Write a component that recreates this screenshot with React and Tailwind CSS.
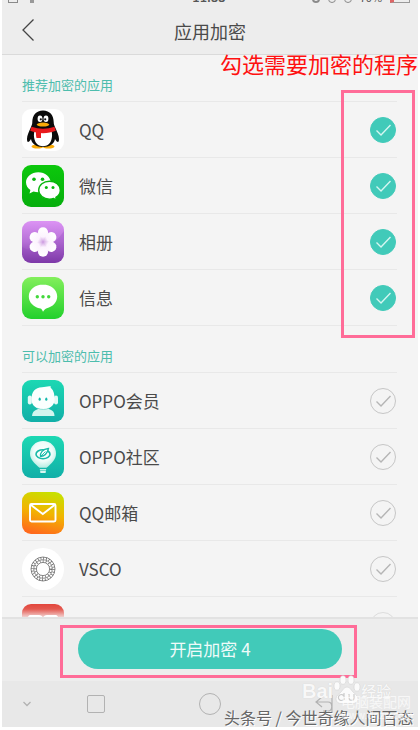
import React, { useState } from 'react';

const QQIcon = () => (
  <svg viewBox="0 0 42 42" className="size-[42px] shrink-0">
    <rect width="42" height="42" rx="9" fill="#fff" />
    <ellipse cx="15.500" cy="37.500" rx="6" ry="2" fill="#faab07" />
    <ellipse cx="26.500" cy="37.500" rx="6" ry="2" fill="#faab07" />
    <path d="M21 1.500C14 1.500 10.300 6.500 10.300 13c0 2-.6 3.300-1.500 5.500C7 22.500 5 26.500 5 30c0 2 .5 3 1 3 .8 0 2-1.200 3-3 .8 4.500 5 8 12 8s11.200-3.500 12-8c1 1.800 2.200 3 3 3 .5 0 1-1 1-3 0-3.500-2-7.500-3.800-11.500-.9-2.200-1.500-3.500-1.500-5.500C31.700 6.500 28 1.500 21 1.500Z" fill="#0b0b0b" />
    <path d="M12.500 22c-.8 3-.8 6 .2 9 1 3.500 4 6.200 8.300 6.200s7.300-2.700 8.300-6.200c1-3 1-6 .2-9Z" fill="#fff" />
    <path d="M9.500 17.800c7.500 2.600 15.500 2.600 23 0l1.300 4c-3.800 1.600-8.300 2.400-12.800 2.400s-9-.8-12.800-2.400Z" fill="#e8191c" />
    <path d="M14 22h5v7h-4.500c-.5-2-.7-4.500-.5-7Z" fill="#e8191c" />
    <ellipse cx="18" cy="9.800" rx="2.400" ry="3.300" fill="#fff" />
    <ellipse cx="24" cy="9.800" rx="2.400" ry="3.300" fill="#fff" />
    <circle cx="18.800" cy="10.300" r="1.100" fill="#111" />
    <circle cx="23.200" cy="10.300" r="1.100" fill="#111" />
    <ellipse cx="21" cy="15.600" rx="6.300" ry="2" fill="#faab07" />
  </svg>
);

const WeChatIcon = () => (
  <svg viewBox="0 0 42 42" className="size-[42px] shrink-0">
    <defs>
      <linearGradient id="wechat-bg" x1="0" y1="0" x2="0" y2="1">
        <stop offset="0" stopColor="#0cc80c" />
        <stop offset="1" stopColor="#06ae0d" />
      </linearGradient>
    </defs>
    <rect width="42" height="42" rx="9" fill="url(#wechat-bg)" />
    <path d="M16.300 7.200C9.500 7.200 4 11.700 4 17.300c0 3.200 1.700 6 4.400 7.800L7.500 28.500l4-2c1.500.5 3.100.8 4.800.8 6.800 0 12.300-4.500 12.300-10S23.100 7.200 16.300 7.200Z" fill="#fff" />
    <path d="M27.500 16.200c-6 0-10.800 4-10.800 9s4.800 9 10.800 9c1.500 0 2.900-.2 4.100-.7l3.100 1.700-.8-2.900c2.700-1.600 4.400-4.200 4.400-7.100 0-5-4.800-9-10.800-9Z" fill="#fff" stroke="#08b50d" strokeWidth="1.400" />
    <circle cx="12" cy="14.200" r="1.800" fill="#09b80d" />
    <circle cx="20.500" cy="14.200" r="1.800" fill="#09b80d" />
    <circle cx="24.300" cy="22.400" r="1.500" fill="#09b80d" />
    <circle cx="31" cy="22.400" r="1.500" fill="#09b80d" />
  </svg>
);

const AlbumIcon = () => (
  <svg viewBox="0 0 42 42" className="size-[42px] shrink-0">
    <defs>
      <linearGradient id="album-bg" x1="0" y1="0" x2="0" y2="1">
        <stop offset="0" stopColor="#dc93f4" />
        <stop offset=".5" stopColor="#b56fd6" />
        <stop offset="1" stopColor="#7935a3" />
      </linearGradient>
      <linearGradient id="petal" x1="0" y1="0" x2="0" y2="1">
        <stop offset="0" stopColor="#fff" />
        <stop offset=".65" stopColor="#fcf3fe" />
        <stop offset="1" stopColor="#cfa0e2" />
      </linearGradient>
    </defs>
    <rect width="42" height="42" rx="9" fill="url(#album-bg)" />
    <path d="M0 26C13 34 30 28 42 10v23a9 9 0 0 1-9 9H9a9 9 0 0 1-9-9Z" fill="#8d42b6" opacity=".25" />
    {[0, 60, 120, 180, 240, 300].map(deg => (
      <path
        key={deg}
        d="M21 21C18 17.500 15.900 14.500 15.900 11.400a5.100 5.100 0 0 1 10.200 0C26.100 14.500 24 17.500 21 21Z"
        fill="url(#petal)"
        transform={`rotate(${deg} 21 21)`}
      />
    ))}
  </svg>
);

const MessageIcon = () => (
  <svg viewBox="0 0 42 42" className="size-[42px] shrink-0">
    <defs>
      <linearGradient id="message-bg" x1="0" y1="0" x2="0" y2="1">
        <stop offset="0" stopColor="#83ef5c" />
        <stop offset="1" stopColor="#22d02c" />
      </linearGradient>
    </defs>
    <rect width="42" height="42" rx="9" fill="url(#message-bg)" />
    <path d="M21 7.500c-7.900 0-14.200 5.300-14.200 12 0 6 5 11 11.700 11.900.8.200 1.800 1.400 2.500 3.300 1.200-1.600 2.300-3 3.800-3.500 6-1.300 10.400-6 10.400-11.700 0-6.700-6.300-12-14.200-12Z" fill="#fff" />
    <circle cx="15.300" cy="19.800" r="1.700" fill="#43d83b" />
    <circle cx="21" cy="19.800" r="1.700" fill="#43d83b" />
    <circle cx="26.700" cy="19.800" r="1.700" fill="#43d83b" />
  </svg>
);

const MemberIcon = () => (
  <svg viewBox="0 0 42 42" className="size-[42px] shrink-0">
    <defs>
      <linearGradient id="oppo-bg" x1="0" y1="0" x2="0" y2="1">
        <stop offset="0" stopColor="#1cd8b3" />
        <stop offset="1" stopColor="#11afa8" />
      </linearGradient>
    </defs>
    <rect width="42" height="42" rx="9" fill="url(#oppo-bg)" />
    <path d="M10 36c.2-3.500 2-5.500 5-6.500l3-1.500h7l3 1.500c3 1 4.500 3 4.500 6.500Z" fill="#d3f5ef" />
    <rect x="5.800" y="15.500" width="4" height="9" rx="2" fill="#e4faf6" />
    <rect x="32" y="15.500" width="4" height="9" rx="2" fill="#e4faf6" />
    <path d="M9.500 19.500C9.500 11.500 13 7.500 20 7.200c3.500-.2 5.500-1.500 9-.9-.7.700-.6 1.300.4 2.200 2.200 2 3.200 5.800 3.200 11 0 6-4.800 9.700-11.600 9.700S9.500 25.500 9.500 19.500Z" fill="#fafffe" />
    <path d="M15.500 28.200c3 1.700 8.500 1.700 11.500 0" fill="none" stroke="#7cd8cd" strokeWidth=".8" />
    <ellipse cx="17.700" cy="19.200" rx="1.100" ry="1.600" fill="#12b9ac" />
    <ellipse cx="24.300" cy="19.200" rx="1.100" ry="1.600" fill="#12b9ac" />
  </svg>
);

const CommunityIcon = () => (
  <svg viewBox="0 0 42 42" className="size-[42px] shrink-0">
    <defs>
      <radialGradient id="balloon" cx=".5" cy=".4" r=".6">
        <stop offset="0" stopColor="#fff" />
        <stop offset=".6" stopColor="#eefcf9" />
        <stop offset="1" stopColor="#b5ece2" />
      </radialGradient>
    </defs>
    <rect width="42" height="42" rx="9" fill="url(#oppo-bg)" />
    <path d="M21 5C13.500 5 8 10.500 8 17.500c0 6 4.500 10 9.500 14.300h7C29.500 27.500 34 23.500 34 17.500 34 10.500 28.500 5 21 5Z" fill="url(#balloon)" />
    <path d="M17.800 33h6.400l-.6 4h-5.200Z" fill="#d9f6f1" />
    <path d="M17.800 34.300h6.400" stroke="#28bfae" strokeWidth=".7" />
    <ellipse cx="21" cy="18.200" rx="7" ry="4.500" fill="none" stroke="#18baa8" strokeWidth="1.600" />
    <path d="M18.500 20.500c-.5-3.500 2-7.500 8-8-1 4.200-3.500 7.500-8 8Z" fill="#fff" stroke="#18baa8" strokeWidth="1.300" />
    <path d="M18.500 20.500l5-5" stroke="#18baa8" strokeWidth=".9" />
  </svg>
);

const MailIcon = () => (
  <svg viewBox="0 0 42 42" className="size-[42px] shrink-0">
    <defs>
      <linearGradient id="mail-bg" x1=".65" y1="0" x2=".4" y2="1">
        <stop offset="0" stopColor="#c8e000" />
        <stop offset=".5" stopColor="#f2b400" />
        <stop offset="1" stopColor="#ff6a1c" />
      </linearGradient>
    </defs>
    <rect width="42" height="42" rx="9" fill="url(#mail-bg)" />
    <rect x="8" y="12" width="25.500" height="17.500" rx="1.500" fill="none" stroke="#fff" strokeWidth="1.900" />
    <path d="M9 13l11.800 9L32.500 13" fill="none" stroke="#fff" strokeWidth="1.900" />
  </svg>
);

const VscoIcon = () => (
  <svg viewBox="0 0 42 42" className="size-[42px] shrink-0">
    <circle cx="21" cy="21" r="21" fill="#fff" />
    <g fill="none" stroke="#6a6a6a">
      <circle cx="21" cy="21" r="12" strokeWidth=".8" />
      <circle cx="21" cy="21" r="9.300" strokeWidth=".7" />
      <circle cx="21" cy="21" r="6.600" strokeWidth=".8" />
      <circle cx="21" cy="21" r="10.700" strokeWidth="2.500" strokeDasharray=".8 2" />
      <circle cx="21" cy="21" r="8" strokeWidth="2.500" strokeDasharray=".8 2.300" />
    </g>
  </svg>
);

const RedIcon = () => (
  <svg viewBox="0 0 42 42" className="size-[42px] shrink-0">
    <defs>
      <linearGradient id="red-bg" x1="0" y1="0" x2="0" y2="1">
        <stop offset="0" stopColor="#e2463c" />
        <stop offset=".12" stopColor="#e4584f" />
        <stop offset=".33" stopColor="#f3dedd" />
      </linearGradient>
    </defs>
    <rect width="42" height="42" rx="9" fill="url(#red-bg)" />
    <path d="M6 14c0-2 1-3 3-3h8c2 0 3 1 4 2.500C22 12 23 11 25 11h8c2 0 3 1 3 3Z" fill="#fff" />
  </svg>
);

const RECOMMENDED = [
  { id: 'qq', name: 'QQ', icon: <QQIcon /> },
  { id: 'wechat', name: '微信', icon: <WeChatIcon /> },
  { id: 'album', name: '相册', icon: <AlbumIcon /> },
  { id: 'message', name: '信息', icon: <MessageIcon /> },
];

const OTHERS = [
  { id: 'member', name: 'OPPO会员', icon: <MemberIcon /> },
  { id: 'community', name: 'OPPO社区', icon: <CommunityIcon /> },
  { id: 'mail', name: 'QQ邮箱', icon: <MailIcon /> },
  { id: 'vsco', name: 'VSCO', icon: <VscoIcon /> },
];

const Check = ({ id, label, checked, onChange }) => (
  <span className="relative size-[26px] shrink-0">
    <input
      id={id}
      type="checkbox"
      aria-label={label}
      checked={checked}
      onChange={onChange}
      className="block size-[26px] appearance-none rounded-full border border-[#c6c6c6] checked:border-[#41cab9] checked:bg-[#41cab9]"
    />
    <svg viewBox="0 0 26 26" className="pointer-events-none absolute inset-0 size-[26px]" fill="none">
      <path d="M6.500 13.500l4.500 4.500L20.500 8" stroke={checked ? '#d5f6f1' : '#b5b5b5'} strokeWidth="1.400" />
    </svg>
  </span>
);

const AppRow = ({ app, checked, onToggle }) => (
  <li className="flex h-14 items-center border-t border-[#e8e8e8] pr-px">
    {app.icon}
    <label htmlFor={app.id} className="ml-[15px] flex-1 text-[17px] leading-6">{app.name}</label>
    <Check id={app.id} checked={checked} onChange={() => onToggle(app.id)} />
  </li>
);

const StatusBar = () => (
  <div className="flex h-[3px] items-end justify-between overflow-hidden pl-1.5 pr-2 text-[#555]">
    <div className="flex flex-1 gap-3">
      <span className="h-2 w-2.5 border border-[#8a8a8a]" />
      <span className="h-2 w-1 bg-[#999]" />
    </div>
    <span className="text-[13px] leading-3 font-medium">11:33</span>
    <div className="flex flex-1 items-end justify-end gap-2">
      <span className="h-2 w-2 rounded-full border-2 border-[#8a8a8a]" />
      <span className="h-2 w-2 rounded-full border border-[#8a8a8a]" />
      <span className="h-2 w-2 rounded-full border border-[#8a8a8a]" />
      <span className="text-[11px] leading-3">70%</span>
      <span className="h-2 w-5 border border-l-4 border-[#999] border-l-[#d66]" />
    </div>
  </div>
);

const Paw = () => (
  <svg viewBox="0 0 28 30" className="h-[30px] w-7" fill="#fbfbfb" stroke="#d3d3d3" strokeWidth=".6">
    <ellipse cx="4" cy="11" rx="3" ry="4.200" />
    <ellipse cx="10" cy="5" rx="3" ry="4.300" />
    <ellipse cx="18" cy="5" rx="3" ry="4.300" />
    <ellipse cx="24" cy="12" rx="3" ry="4.200" />
    <path d="M14 12c-3 0-4 3-6 5s-5 3.500-5 7c0 3 2.500 4.500 5 4.500h12c2.500 0 5-1.500 5-4.500 0-3.500-3-5-5-7s-3-5-6-5Z" />
    <path d="M11 18v7M11 21a3 3 0 1 0 0 3M16 19v4c0 3 5 3 5 0v-4" fill="none" stroke="#ccc" strokeWidth="1.200" />
  </svg>
);

export default function App() {
  const [selected, setSelected] = useState(['qq', 'wechat', 'album', 'message']);

  const toggle = (id) => {
    setSelected(s => (s.includes(id) ? s.filter(x => x !== id) : [...s, id]));
  };

  const renderRows = (apps) => apps.map(app => (
    <AppRow key={app.id} app={app} checked={selected.includes(app.id)} onToggle={toggle} />
  ));

  return (
    <div className="overflow-hidden bg-white px-0.5 font-['Noto_Sans_CJK_SC',sans-serif] text-[#4a4a4a]">
      <div className="bg-[#f4f4f4]">
        <header className="border-b border-[#dadada] bg-[#ededed]">
          <StatusBar />
          <div className="grid h-[51px] grid-cols-[1fr_auto_1fr] items-center px-5">
            <button aria-label="返回" className="w-3 pt-0.5">
              <svg viewBox="0 0 12 22" className="h-[22px] w-3" fill="none" stroke="#444" strokeWidth="1.300">
                <path d="M11.500.5L1 11l10.500 10.500" />
              </svg>
            </button>
            <h1 className="pt-1 text-[18px] leading-6">应用加密</h1>
          </div>
        </header>

        <main>
          <section className="relative pl-5 pr-[21px]">
            <h2 className="h-[46px] pt-5 text-[13px] leading-5 text-[#4dbdad]">推荐加密的应用</h2>
            <ul>{renderRows(RECOMMENDED)}</ul>
            <p className="absolute -top-2 left-[218px] whitespace-nowrap text-[22px] leading-8 text-[#ff1010]">勾选需要加密的程序</p>
            <div className="pointer-events-none absolute right-[3px] top-[35px] h-[248px] w-[74px] border-3 border-[#ff6c98]" />
          </section>

          <section className="pl-5 pr-[21px]">
            <h2 className="h-[47px] border-t border-[#e8e8e8] pt-5 text-[13px] leading-5 text-[#4dbdad]">可以加密的应用</h2>
            <ul>
              {renderRows(OTHERS)}
              <li className="flex h-[21px] items-start justify-between overflow-hidden border-t border-[#e8e8e8] pr-px pt-[7px]">
                <RedIcon />
                <span className="pt-2 opacity-50">
                  <Check label="更多应用" checked={false} onChange={() => {}} />
                </span>
              </li>
            </ul>
          </section>
        </main>

        <footer>
          <div className="flex h-16 justify-center border-t-2 border-[#e2e2e2] bg-[#ededed] pt-[10px]">
            <div className="relative h-10 w-[264px]">
              <button className="h-10 w-full rounded-full bg-[#41cab9] text-[17px] leading-6 text-[#effbf9]">
                开启加密 {selected.length}
              </button>
              <div className="pointer-events-none absolute -bottom-[9px] -left-[18px] -right-[15px] -top-1 border-3 border-[#ff6c98]" />
            </div>
          </div>

          <nav className="relative grid h-[46px] grid-cols-[12%_21%_34%_21%] place-items-center bg-[#e8e8e8] text-[#b2b2b2]">
            <button aria-label="收起" className="w-[10px]">
              <svg viewBox="0 0 10 6" className="h-1.5 w-[10px]" fill="none" stroke="currentColor" strokeWidth="1.300"><path d="M1.500 1L5 4.500 8.500 1" /></svg>
            </button>
            <button aria-label="最近任务" className="size-[18px] rounded-xs border border-current" />
            <button aria-label="主页" className="size-[22px] rounded-full border border-current" />
            <button aria-label="后退" className="w-[18px]">
              <svg viewBox="0 0 18 20" className="h-5 w-[18px]" fill="none" stroke="currentColor" strokeWidth="1.200"><path d="M7 3L1 8l6 5M1 8h12c5 0 5 9 0 9H8M17 1v18" /></svg>
            </button>

            <div className="pointer-events-none absolute -top-1.5 left-[300px] flex items-end text-[#f8f8f8] text-shadow-[0_0_1px_#ccc]">
              <span className="font-['Liberation_Sans',sans-serif] text-[20px] font-bold leading-7">Bai</span>
              <Paw />
              <span className="text-[15px] font-medium leading-7">经验</span>
            </div>
            <p className="pointer-events-none absolute -bottom-0.5 left-[222px] whitespace-nowrap text-[16px] leading-6 text-[#666] text-shadow-[1px_1px_0_#fff]">头条号 / 今世奇缘人间百态</p>
            <div className="pointer-events-none absolute left-[339px] top-3 text-white/70">
              <p className="text-[14px] leading-4">电脑装配网</p>
              <p className="text-[10px] leading-3">www.dnzp.com</p>
            </div>
          </nav>
        </footer>
      </div>
    </div>
  );
}
